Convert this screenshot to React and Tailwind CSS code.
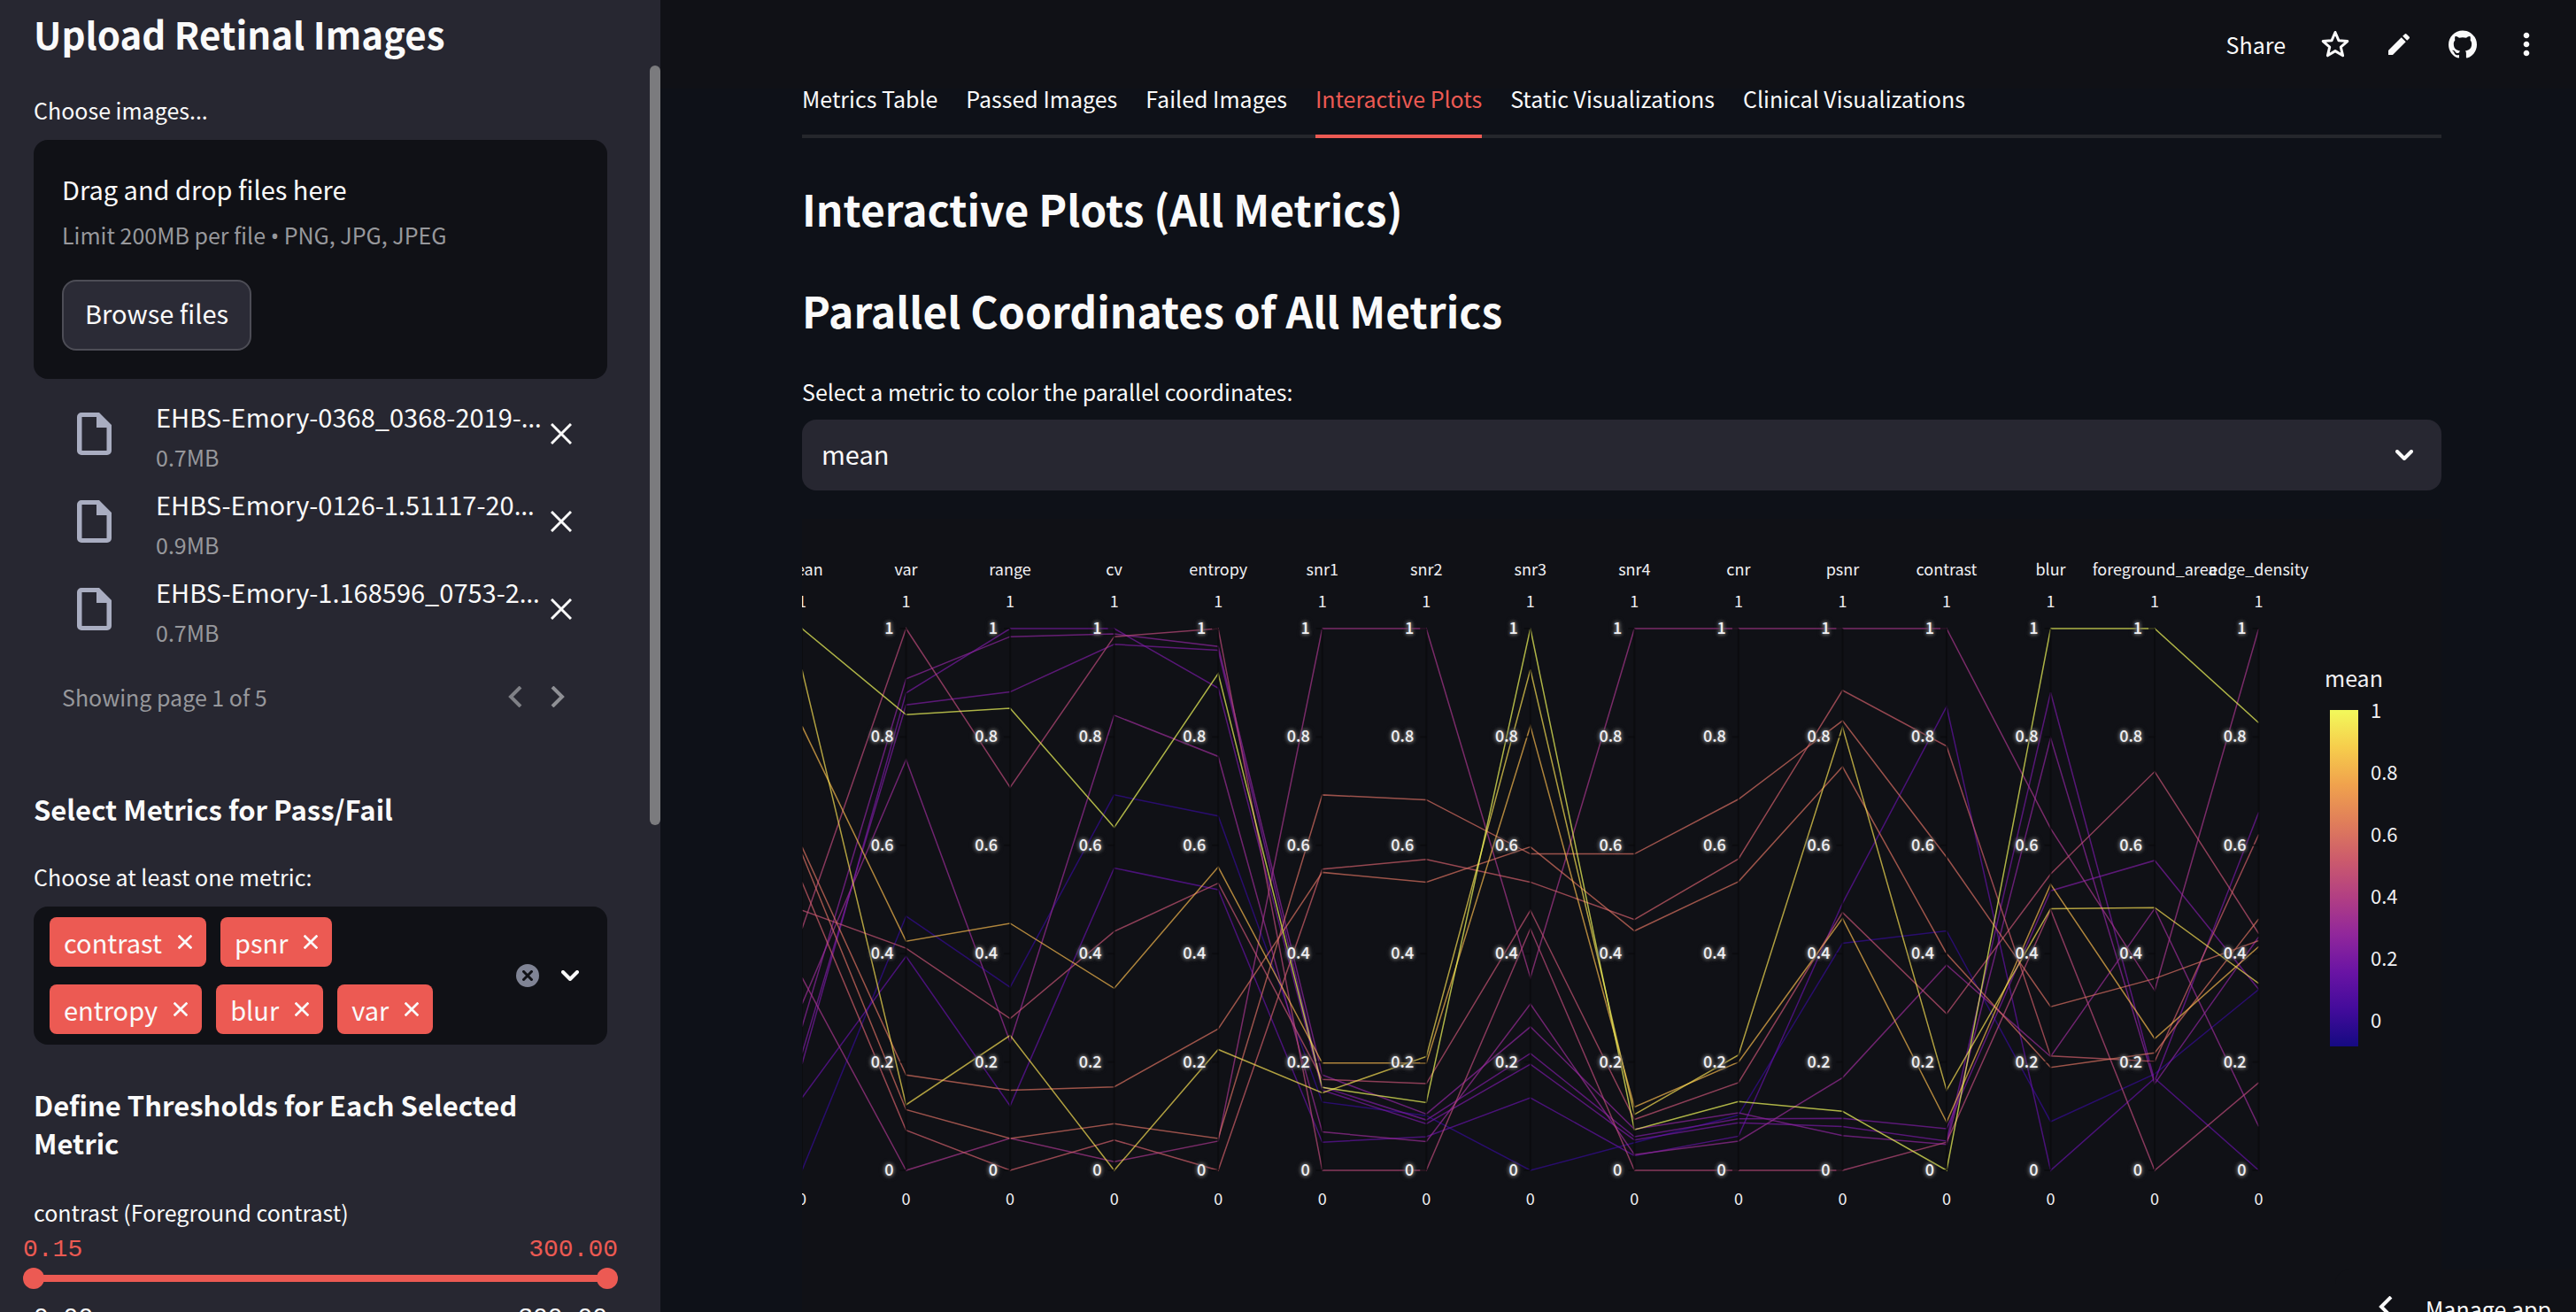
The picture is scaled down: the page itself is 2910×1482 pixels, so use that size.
import React from "react";
import { MdEdit, MdMoreVert } from "react-icons/md";

const AXES = ["mean", "var", "range", "cv", "entropy", "snr1", "snr2", "snr3", "snr4", "cnr", "psnr", "contrast", "blur", "foreground_area", "edge_density"];

const ROWS = [
  [0, 0.469, 0.338, 0.693, 0.654, 0.126, 0.101, 0, 0.051, 0.102, 0.419, 0.442, 0.09, 0.178, 0.334],
  [0.134, 0.395, 0.119, 0.558, 0.518, 0.052, 0.062, 0.134, 0.027, 0.063, 0.493, 0.856, 0, 0.17, 0],
  [0.196, 0.881, 1, 1, 0.89, 0.148, 0.086, 0.196, 0.056, 0.088, 0.081, 0.054, 0.882, 0.165, 0.661],
  [0.216, 0.859, 0.883, 0.971, 0.96, 0.154, 0.093, 0.216, 0.062, 0.095, 0.096, 0.077, 0.516, 0.572, 0.334],
  [0.265, 0.907, 0.985, 0.99, 0.967, 0.176, 0.104, 0.265, 0.076, 0.106, 0.064, 0.048, 0.798, 0.16, 0.431],
  [0.307, 0.758, 0.237, 0.84, 0.764, 0.071, 0.053, 0.307, 0.029, 0.054, 0.171, 0.379, 0.21, 0.483, 0.081],
  [0.356, 0, 0.059, 0.016, 0.054, 1, 1, 0.356, 1, 1, 1, 1, 0.631, 0.332, 1],
  [0.446, 1, 0.707, 0.985, 1, 0, 0, 0.446, 0, 0, 0, 0.052, 0.481, 0, 0.162],
  [0.48, 0.41, 0.28, 0.441, 0.53, 0.168, 0.16, 0.48, 0.094, 0.162, 0.476, 0.289, 0.547, 0.736, 0.437],
  [0.532, 0.074, 0, 0.056, 0, 0.556, 0.574, 0.532, 0.463, 0.575, 0.886, 0.783, 0.211, 0.201, 0.62],
  [0.584, 0.112, 0.059, 0.086, 0.059, 0.693, 0.684, 0.584, 0.584, 0.685, 0.83, 0.578, 0.302, 0.354, 0.424],
  [0.597, 0.176, 0.148, 0.154, 0.261, 0.55, 0.532, 0.597, 0.442, 0.533, 0.745, 0.4, 0.19, 0.217, 0.464],
  [0.82, 0.423, 0.456, 0.336, 0.56, 0.198, 0.198, 0.82, 0.117, 0.2, 0.465, 0.089, 0.528, 0.243, 0.413],
  [0.924, 0.121, 0.249, 0, 0.223, 0.143, 0.21, 0.924, 0.103, 0.213, 0.818, 0.148, 0.483, 0.485, 0.345],
  [1, 0.841, 0.853, 0.633, 0.917, 0.153, 0.125, 1, 0.075, 0.127, 0.109, 0, 1, 1, 0.826],
];

const SCALE = [
  [21, 10, 130], [67, 11, 155], [106, 20, 164], [145, 39, 155], [178, 63, 131],
  [204, 91, 108], [224, 126, 90], [240, 162, 77], [246, 205, 76], [242, 249, 91],
];

const MIN = -0.08;

function rgb(t) {
  const p = Math.max(0, Math.min(1, t)) * (SCALE.length - 1);
  const i = Math.min(SCALE.length - 2, Math.floor(p));
  const c = SCALE[i].map((a, k) => Math.round(a + (SCALE[i + 1][k] - a) * (p - i)));
  return `rgb(${c.join(",")})`;
}

const axisX = (i) => (i * 1645.6) / 14;
const valueY = (v) => 736 - v * 612;
const TICKS = [0, 0.2, 0.4, 0.6, 0.8, 1];

function ParallelChart() {
  return (
    <svg viewBox="0 0 1852 900" role="img" aria-label="Parallel coordinates of all metrics" className="mt-8 block w-full shrink-0 bg-[#101116] fill-[#f0f0f3] text-[18px]">
      <defs>
        <linearGradient id="scale" x1="0" y1="1" x2="0" y2="0">
          {SCALE.map((c, i) => (
            <stop key={i} offset={i / (SCALE.length - 1)} stopColor={`rgb(${c.join(",")})`} />
          ))}
        </linearGradient>
      </defs>
      <g fill="none" strokeWidth="1.5" strokeOpacity="0.7">
        {ROWS.map((r, k) => (
          <polyline key={k} stroke={rgb((r[0] - MIN) / (1 - MIN))} points={r.map((v, i) => `${axisX(i)},${valueY(v)}`).join(" ")} />
        ))}
      </g>
      {AXES.map((name, i) => (
        <g key={name} textAnchor="middle">
          <path d={`M${axisX(i)} 124V736`} stroke="#0a0a0d" strokeWidth="2" strokeOpacity="0.7" />
          <text x={axisX(i)} y="64">{name}</text>
          <text x={axisX(i)} y="100">1</text>
          <text x={axisX(i)} y="775">0</text>
          {i > 0 && TICKS.map((t) => (
            <g key={t}>
              <path d={`M${axisX(i) - 7} ${valueY(t)}h7`} stroke="#0a0a0d" strokeWidth="2" strokeOpacity="0.7" />
              <text x={axisX(i) - 14} y={valueY(t) + 6} textAnchor="end" className="font-medium [text-shadow:0_0_2px_#666,0_0_4px_#666,0_0_4px_#666,0_0_6px_#666]">{t}</text>
            </g>
          ))}
        </g>
      ))}
      <text x="1720" y="190" className="text-[25px]">mean</text>
      <rect x="1726" y="216" width="32" height="380" fill="url(#scale)" />
      {TICKS.map((t) => (
        <text key={t} x="1772" y={575 - t * 350} className="text-[22px]">{t}</text>
      ))}
    </svg>
  );
}

function Cross({ className, width = 2 }) {
  return (
    <svg viewBox="0 0 24 24" className={className} fill="none" stroke="currentColor" strokeWidth={width} aria-hidden="true">
      <path d="M1 1l22 22M23 1L1 23" />
    </svg>
  );
}

function Chevron({ d, className }) {
  return (
    <svg viewBox="0 0 24 24" className={className} fill="none" stroke="currentColor" strokeWidth="4" aria-hidden="true">
      <path d={d} />
    </svg>
  );
}

function Down() {
  return (
    <svg viewBox="0 0 20 12" className="h-3 w-5 shrink-0" fill="none" stroke="currentColor" strokeWidth="4" strokeLinecap="round" strokeLinejoin="round" aria-hidden="true">
      <path d="M2 2l8 8 8-8" />
    </svg>
  );
}

function FileRow({ name, size }) {
  return (
    <li className="flex items-center pl-[49px] pr-10">
      <svg viewBox="0 0 39 48" className="h-12 w-[39px] shrink-0 text-[#a9adc1]" aria-hidden="true">
        <path fill="currentColor" fillRule="evenodd" d="M5 0H25L39 14V43a5 5 0 0 1-5 5H5a5 5 0 0 1-5-5V5a5 5 0 0 1 5-5zM5.500 5V43H33.500V17H22V5z" />
      </svg>
      <div className="ml-[50px] min-w-0 grow">
        <p className="whitespace-nowrap text-[29px] leading-[48px]">{name}<span className="font-['Noto_Sans'] leading-none">…</span></p>
        <p className="mt-1 text-[25px] leading-9 text-[#97989c]">{size}</p>
      </div>
      <button aria-label={`Remove ${name}`} className="ml-2 size-6 shrink-0"><Cross className="size-6" width={3} /></button>
    </li>
  );
}

function Tag({ children }) {
  return (
    <span className="flex h-14 items-center gap-[18px] rounded-lg bg-[#ec5a53] px-4 text-[29px] leading-none">
      {children}
      <button aria-label={`Remove ${children}`}><Cross className="size-4" width={4} /></button>
    </span>
  );
}

const RANGE = "pointer-events-none absolute inset-0 h-6 w-full appearance-none bg-transparent [&::-webkit-slider-thumb]:pointer-events-auto [&::-webkit-slider-thumb]:size-6 [&::-webkit-slider-thumb]:appearance-none [&::-webkit-slider-thumb]:rounded-full [&::-webkit-slider-thumb]:bg-[#ec5a53]";

function Sidebar() {
  return (
    <aside className="flex w-[746px] shrink-0 justify-between overflow-hidden bg-[#272731]">
      <div className="ml-[38px] flex w-[648px] flex-col [&>*]:shrink-0">
        <h2 className="mt-3 text-[42px] font-bold leading-[52px]">Upload Retinal Images</h2>
        <p className="mt-[42px] text-[25px] leading-9">Choose images...</p>
        <section className="mt-4 rounded-2xl bg-[#101116] p-8">
          <p className="text-[29px] leading-[46px]">Drag and drop files here</p>
          <p className="mt-[11px] text-[25px] leading-9 text-[#97989c]">Limit 200MB per file <span className="font-['Noto_Sans'] leading-none">•</span> PNG, JPG, JPEG</p>
          <button className="mt-[33px] h-20 rounded-2xl border-2 border-[#4d4d56] bg-[#2b2b36] px-6 pb-1 text-[29px]">Browse files</button>
        </section>
        <ul className="mt-[18px] flex flex-col gap-[11px]">
          <FileRow name="EHBS-Emory-0368_0368-2019-" size="0.7MB" />
          <FileRow name="EHBS-Emory-0126-1.51117-20" size="0.9MB" />
          <FileRow name="EHBS-Emory-1.168596_0753-2" size="0.7MB" />
        </ul>
        <div className="mt-[37px] flex items-center pl-8 pr-11 text-[#97989c]">
          <p className="grow text-[25px] leading-9">Showing page 1 of 5</p>
          <button aria-label="Previous page" className="mr-6 text-[#7f8086]"><Chevron className="size-6" d="M18 1L7 12l11 11" /></button>
          <button aria-label="Next page" className="text-[#8f9095]"><Chevron className="size-6" d="M6 1l11 11L6 23" /></button>
        </div>
        <h3 className="mt-[87px] text-[31px] font-bold leading-[43px]">Select Metrics for Pass/Fail</h3>
        <p className="mt-[37px] text-[25px] leading-9">Choose at least one metric:</p>
        <div className="mt-4 flex items-center rounded-2xl bg-[#101116] py-3 pl-[18px] pr-8">
          <div className="flex grow flex-wrap gap-x-4 gap-y-5 pr-16">
            <div className="flex gap-4"><Tag>contrast</Tag><Tag>psnr</Tag></div>
            <div className="flex gap-4"><Tag>entropy</Tag><Tag>blur</Tag><Tag>var</Tag></div>
          </div>
          <button aria-label="Clear all" className="mr-[25px] flex size-[26px] shrink-0 items-center justify-center rounded-full bg-[#808495] text-[#101116]"><Cross className="size-3" width={6} /></button>
          <button aria-label="Open"><Down /></button>
        </div>
        <h3 className="mt-[46px] text-[31px] font-bold leading-[43px]">Define Thresholds for Each Selected Metric</h3>
        <p className="mt-[39px] text-[25px] leading-9">contrast (Foreground contrast)</p>
        <div className="-mx-3 mt-[9px] flex justify-between font-['Liberation_Mono'] text-[28px] leading-8 text-[#ec5a53]">
          <span>0.15</span><span>300.00</span>
        </div>
        <div className="relative -mx-3 mt-1 flex h-6 items-center px-3">
          <div className="h-2 grow bg-[#ec5a53]" />
          <input type="range" aria-label="contrast minimum" min="0" max="300" step="0.01" defaultValue="0" className={RANGE} />
          <input type="range" aria-label="contrast maximum" min="0" max="300" step="0.01" defaultValue="300" className={RANGE} />
        </div>
        <div className="mt-[17px] flex justify-between font-['Liberation_Mono'] text-[28px] leading-8">
          <span>0.00</span><span>300.00</span>
        </div>
      </div>
      <div className="mt-[74px] h-[858px] w-3 rounded-full bg-[#7b7b7e]" />
    </aside>
  );
}

const TABS = ["Metrics Table", "Passed Images", "Failed Images", "Interactive Plots", "Static Visualizations", "Clinical Visualizations"];

function Header() {
  return (
    <header className="flex h-[100px] shrink-0 items-center justify-end gap-8 bg-[#101116] pr-9">
      <button className="mr-1 text-[25px] leading-9">Share</button>
      <button aria-label="Favorite" className="flex size-10 items-center justify-center">
        <svg viewBox="0 0 40 40" className="size-10" fill="none" stroke="currentColor" strokeWidth="3" strokeLinejoin="round" aria-hidden="true">
          <path d="M20 6.500l3.900 9.200 9.900.9-7.500 6.500 2.300 9.700L20 27.600l-8.600 5.200 2.300-9.700-7.500-6.500 9.900-.9z" />
        </svg>
      </button>
      <button aria-label="Edit" className="flex size-10 items-center justify-center"><MdEdit className="size-8" /></button>
      <button aria-label="View source" className="flex size-10 items-center justify-center">
        <svg viewBox="0 0 24 24" className="size-8" fill="currentColor" aria-hidden="true">
          <path d="M12 .297c-6.630 0-12 5.373-12 12 0 5.303 3.438 9.800 8.205 11.385.6.113.82-.258.82-.577 0-.285-.01-1.040-.015-2.040-3.338.724-4.042-1.610-4.042-1.610C4.422 18.070 3.633 17.700 3.633 17.700c-1.087-.744.084-.729.084-.729 1.205.084 1.838 1.236 1.838 1.236 1.070 1.835 2.809 1.305 3.495.998.108-.776.417-1.305.76-1.605-2.665-.3-5.466-1.332-5.466-5.930 0-1.310.465-2.380 1.235-3.220-.135-.303-.54-1.523.105-3.176 0 0 1.005-.322 3.300 1.230.96-.267 1.980-.399 3-.405 1.020.006 2.040.138 3 .405 2.280-1.552 3.285-1.230 3.285-1.230.645 1.653.24 2.873.12 3.176.765.84 1.230 1.910 1.230 3.220 0 4.610-2.805 5.625-5.475 5.920.42.36.81 1.096.81 2.220 0 1.606-.015 2.896-.015 3.286 0 .315.21.69.825.57C20.565 22.092 24 17.592 24 12.297c0-6.627-5.373-12-12-12" />
        </svg>
      </button>
      <button aria-label="Menu" className="flex size-10 items-center justify-center"><MdMoreVert className="size-10" /></button>
    </header>
  );
}

export default function App() {
  return (
    <div className="flex h-screen overflow-hidden bg-[#0e1118] font-['Noto_Sans_CJK_SC','Noto_Sans',sans-serif] text-[#fafafa]">
      <Sidebar />
      <div className="flex min-w-0 grow flex-col overflow-hidden">
        <Header />
        <main className="flex min-h-0 flex-col pl-40 pr-[152px]">
          <nav role="tablist" className="flex gap-8 border-b-4 border-[#25272c]">
            {TABS.map((t) => (
              <button key={t} role="tab" aria-selected={t === "Interactive Plots"} className="-mb-1 whitespace-nowrap border-b-4 border-transparent pb-[30px] text-[25px] leading-[22px] aria-selected:border-[#ec5a53] aria-selected:text-[#ec5a53]">{t}</button>
            ))}
          </nav>
          <h1 className="mt-[45px] text-5xl font-bold leading-[68px]">Interactive Plots (All Metrics)</h1>
          <h1 className="mt-[47px] text-5xl font-bold leading-[68px]">Parallel Coordinates of All Metrics</h1>
          <label htmlFor="metric" className="mt-10 text-[25px] leading-9">Select a metric to color the parallel coordinates:</label>
          <div className="mt-[14px] grid shrink-0 items-center">
            <select id="metric" className="col-start-1 row-start-1 h-20 w-full appearance-none rounded-2xl bg-[#272731] px-[22px] pb-0.5 text-[29px]">
              <option>mean</option>
            </select>
            <span className="pointer-events-none col-start-1 row-start-1 mr-8 justify-self-end"><Down /></span>
          </div>
          <ParallelChart />
        </main>
      </div>
      <button className="fixed bottom-0 right-0 flex h-12 items-start overflow-hidden rounded-tl-2xl bg-[#101116] pl-11 pr-7 pt-[26px] text-[25px] leading-9">
        <Chevron className="mr-[34px] mt-1 size-6" d="M19 1L8 12l11 11" />
        Manage app
      </button>
    </div>
  );
}
